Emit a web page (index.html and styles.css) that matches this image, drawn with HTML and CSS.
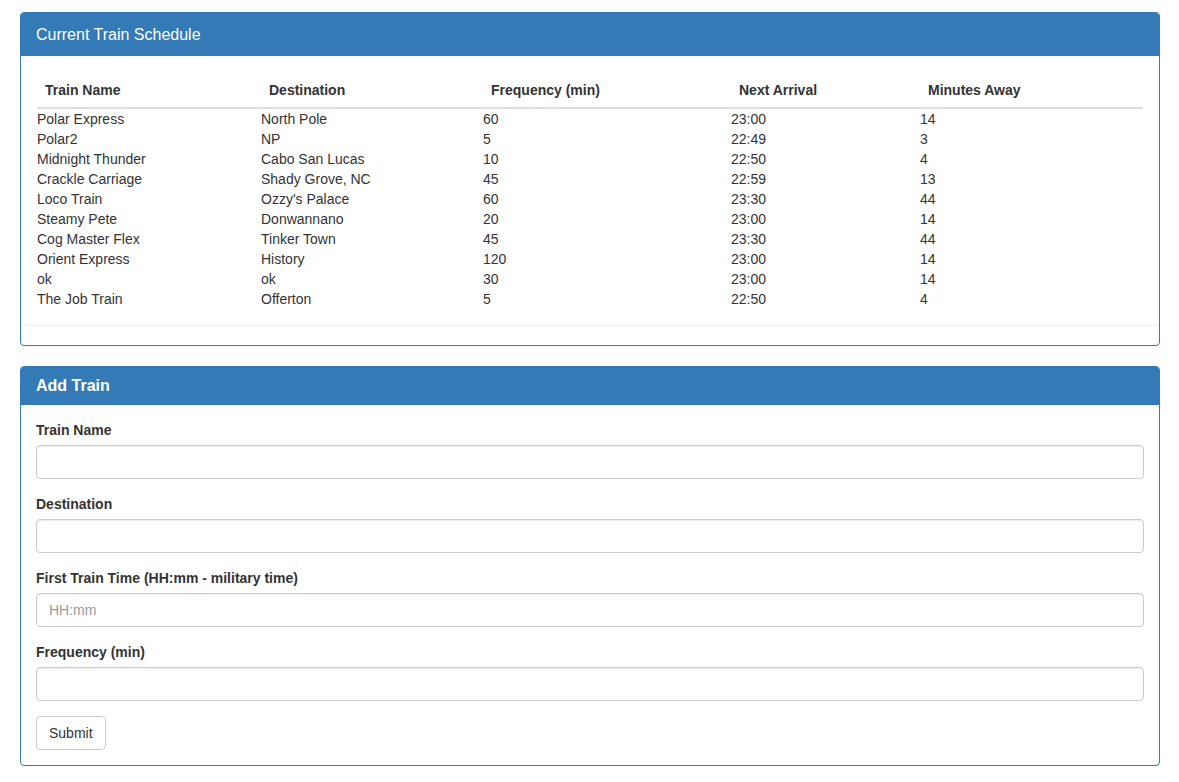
FILE: index.html
```html
<!DOCTYPE html>
<html>
<head>
<meta charset="utf-8">
<link rel="stylesheet" href="styles.css">
</head>
<body>
<div class="page">
  <div class="panel">
    <div class="panel-heading heading-lg">
      <h3 class="panel-title">Current Train Schedule</h3>
    </div>
    <div class="panel-body schedule-body">
      <table class="schedule">
        <colgroup>
          <col class="c1"><col class="c2"><col class="c3"><col class="c4"><col class="c5">
        </colgroup>
        <thead>
          <tr><th>Train Name</th><th>Destination</th><th>Frequency (min)</th><th>Next Arrival</th><th>Minutes Away</th></tr>
        </thead>
        <tbody>
          <tr><td>Polar Express</td><td>North Pole</td><td>60</td><td>23:00</td><td>14</td></tr>
          <tr><td>Polar2</td><td>NP</td><td>5</td><td>22:49</td><td>3</td></tr>
          <tr><td>Midnight Thunder</td><td>Cabo San Lucas</td><td>10</td><td>22:50</td><td>4</td></tr>
          <tr><td>Crackle Carriage</td><td>Shady Grove, NC</td><td>45</td><td>22:59</td><td>13</td></tr>
          <tr><td>Loco Train</td><td>Ozzy's Palace</td><td>60</td><td>23:30</td><td>44</td></tr>
          <tr><td>Steamy Pete</td><td>Donwannano</td><td>20</td><td>23:00</td><td>14</td></tr>
          <tr><td>Cog Master Flex</td><td>Tinker Town</td><td>45</td><td>23:30</td><td>44</td></tr>
          <tr><td>Orient Express</td><td>History</td><td>120</td><td>23:00</td><td>14</td></tr>
          <tr><td>ok</td><td>ok</td><td>30</td><td>23:00</td><td>14</td></tr>
          <tr><td>The Job Train</td><td>Offerton</td><td>5</td><td>22:50</td><td>4</td></tr>
        </tbody>
      </table>
      <div class="table-foot"></div>
    </div>
  </div>

  <div class="panel">
    <div class="panel-heading">
      <h3 class="panel-title bold">Add Train</h3>
    </div>
    <div class="panel-body">
      <form class="train-form">
        <div class="form-group">
          <label>Train Name</label>
          <input type="text" class="form-control">
        </div>
        <div class="form-group">
          <label>Destination</label>
          <input type="text" class="form-control">
        </div>
        <div class="form-group">
          <label>First Train Time (HH:mm - military time)</label>
          <input type="text" class="form-control" placeholder="HH:mm">
        </div>
        <div class="form-group">
          <label>Frequency (min)</label>
          <input type="text" class="form-control">
        </div>
        <button type="button" class="btn">Submit</button>
      </form>
    </div>
  </div>
</div>
</body>
</html>
```

FILE: styles.css
```css
* { box-sizing: border-box; }
html, body { margin: 0; padding: 0; background: #fff; }
body {
  font-family: "Liberation Sans", Arial, sans-serif;
  font-size: 14px;
  line-height: 20px;
  color: #333;
}
.page { padding: 12px 19px 0 20px; }

.panel {
  border: 1px solid #337ab7;
  border-radius: 4px;
  margin-bottom: 20px;
  background: #fff;
}
.panel-heading {
  background: #337ab7;
  color: #fff;
  padding: 10px 15px;
  border-top-left-radius: 3px;
  border-top-right-radius: 3px;
}
.heading-lg { padding: 12px 15px 11px; }
.panel-title {
  margin: 0;
  font-size: 16px;
  line-height: 18px;
  font-weight: normal;
}
.heading-lg .panel-title { line-height: 20px; }
.panel-title.bold { font-weight: bold; }

.panel-body { padding: 15px; }
.schedule-body { padding: 15px 0 19px; }

.schedule {
  table-layout: fixed;
  border-collapse: collapse;
  width: 1106px;
  margin-left: 16px;
}
.c1 { width: 224px; }
.c2 { width: 222px; }
.c3 { width: 248px; }
.c4 { width: 189px; }
.c5 { width: 223px; }
.schedule th {
  text-align: left;
  font-weight: bold;
  padding: 9px 8px 7px;
  border-bottom: 2px solid #ddd;
}
.schedule td {
  padding: 0;
  height: 20px;
}
.table-foot {
  margin-top: 16px;
  border-top: 1px solid #f2f2f2;
}

.form-group { margin-bottom: 15px; }
.form-group label {
  display: block;
  font-weight: bold;
  margin-bottom: 5px;
}
.form-control {
  display: block;
  width: 100%;
  height: 34px;
  padding: 6px 12px;
  font-family: inherit;
  font-size: 14px;
  color: #555;
  border: 1px solid #ccc;
  border-radius: 4px;
  box-shadow: inset 0 1px 1px rgba(0,0,0,.075);
  background: #fff;
}
.form-control::placeholder { color: #999; }
.btn {
  display: inline-block;
  height: 34px;
  padding: 6px 12px;
  font-family: inherit;
  font-size: 14px;
  line-height: 20px;
  color: #333;
  background: #fff;
  border: 1px solid #ccc;
  border-radius: 4px;
}
```
